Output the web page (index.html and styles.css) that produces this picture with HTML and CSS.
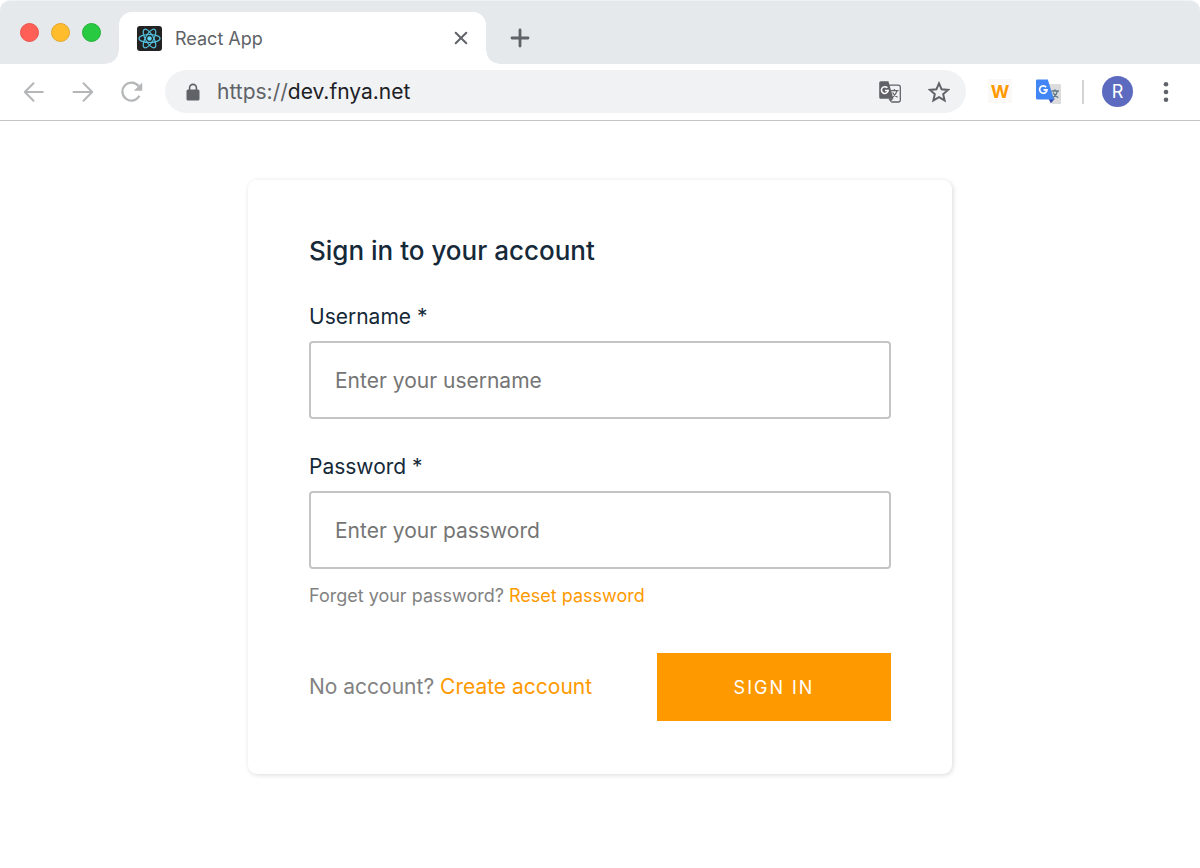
FILE: index.html
```html
<!DOCTYPE html>
<html lang="en">
<head>
    <meta charset="UTF-8">
    <meta name="viewport" content="width=device-width, initial-scale=1.0">
    <title>React App</title>
    <link rel="stylesheet" href="styles.css">
</head>
<body>
    <header class="browser">
        <div class="tab-strip">
            <div class="lights">
                <span class="light red"></span>
                <span class="light yellow"></span>
                <span class="light green"></span>
            </div>
            <div class="tab">
                <svg class="favicon" width="25" height="25" viewBox="0 0 25 25">
                    <rect width="25" height="25" rx="3" fill="#222"/>
                    <g fill="none" stroke="#53c1de" stroke-width="1.2">
                        <ellipse cx="12.5" cy="12.5" rx="10.5" ry="4"/>
                        <ellipse cx="12.5" cy="12.5" rx="10.5" ry="4" transform="rotate(60 12.5 12.5)"/>
                        <ellipse cx="12.5" cy="12.5" rx="10.5" ry="4" transform="rotate(120 12.5 12.5)"/>
                    </g>
                    <circle cx="12.5" cy="12.5" r="2.2" fill="#61dafb"/>
                </svg>
                <span class="tab-title">React App</span>
                <button class="icon-btn" type="button" aria-label="Close tab">
                    <svg width="14" height="14" viewBox="0 0 14 14" fill="none" stroke="#5f6368" stroke-width="2" stroke-linecap="round">
                        <path d="M1.7 1.7l10.6 10.6M12.3 1.7L1.7 12.3"/>
                    </svg>
                </button>
            </div>
            <button class="icon-btn new-tab" type="button" aria-label="New tab">
                <svg width="20" height="20" viewBox="0 0 20 20" fill="none" stroke="#5f6368" stroke-width="2.8" stroke-linecap="round">
                    <path d="M10 2v16M2 10h16"/>
                </svg>
            </button>
        </div>

        <div class="toolbar">
            <nav class="nav-buttons">
                <button class="icon-btn" type="button" aria-label="Back">
                    <svg width="22" height="22" viewBox="0 0 22 22" fill="none" stroke="#b4b6b8" stroke-width="2" stroke-linecap="round" stroke-linejoin="round">
                        <path d="M19.8 11H2M10.5 2.3L1.8 11l8.7 8.7"/>
                    </svg>
                </button>
                <button class="icon-btn" type="button" aria-label="Forward">
                    <svg width="22" height="22" viewBox="0 0 22 22" fill="none" stroke="#b4b6b8" stroke-width="2" stroke-linecap="round" stroke-linejoin="round">
                        <path d="M1.5 11H20M11.5 2.3l8.7 8.7-8.7 8.7"/>
                    </svg>
                </button>
                <button class="icon-btn" type="button" aria-label="Reload">
                    <svg width="22" height="22" viewBox="0 0 22 22">
                        <path d="M17.6 5.2A9 9 0 1 0 18.4 14.8" fill="none" stroke="#b4b6b8" stroke-width="2.2"/>
                        <path d="M21.2 1.4v8.4h-8.4z" fill="#b4b6b8"/>
                    </svg>
                </button>
            </nav>

            <div class="address-bar">
                <svg class="lock" width="14" height="18" viewBox="0 0 14 18">
                    <rect x="0.5" y="6.5" width="13" height="11" rx="1.6" fill="#5f6368"/>
                    <path d="M3.6 7V4.8a3.4 3.4 0 0 1 6.8 0V7" fill="none" stroke="#5f6368" stroke-width="1.6"/>
                </svg>
                <div class="url"><span class="scheme">https://</span>dev.fnya.net</div>
                <button class="icon-btn" type="button" aria-label="Translate this page">
                    <svg width="22" height="22" viewBox="0 0 22 22">
                        <path d="M8.5 4.2h11a1.8 1.8 0 0 1 1.8 1.8v13.2a1.8 1.8 0 0 1-1.8 1.8h-7.3" fill="none" stroke="#5f6368" stroke-width="1.3"/>
                        <path d="M1.8 0.2h7.6l5 17.6H1.8A1.6 1.6 0 0 1 0.2 16.2V1.8A1.6 1.6 0 0 1 1.8 0.2z" fill="#5f6368"/>
                        <path d="M9.3 17.5h5l-2.8 3.6z" fill="#5f6368"/>
                        <path d="M8.4 6.8A3.4 3.4 0 1 0 9.2 9.5H6" fill="none" stroke="#fff" stroke-width="1.5"/>
                        <path d="M12 9.7h7.5M15.4 8v1.7M18 9.7c-.6 2.8-2.2 4.900-4.300 6.500M13.600 11.400c1 2.200 2.600 3.700 5 4.900" fill="none" stroke="#5f6368" stroke-width="1.2"/>
                    </svg>
                </button>
                <button class="icon-btn" type="button" aria-label="Bookmark this page">
                    <svg width="22" height="22" viewBox="0 0 22 22" fill="none" stroke="#5f6368" stroke-width="2">
                        <path d="M11 2.4l2.6 5.900 6.400.6-4.800 4.200 1.400 6.300L11 16.100l-5.600 3.300 1.400-6.300L2 8.900l6.400-.6z"/>
                    </svg>
                </button>
            </div>

            <div class="extensions">
                <button class="icon-btn ext-w" type="button" aria-label="W extension">W</button>
                <button class="icon-btn" type="button" aria-label="Google Translate">
                    <svg width="25" height="25" viewBox="0 0 25 25">
                        <path d="M11 5h12.5a1.5 1.5 0 0 1 1.5 1.5V25H16z" fill="#dcdcdc"/>
                        <path d="M12.500 19.500h6.500l-4.200 5z" fill="#3749ab"/>
                        <path d="M1.2 0.5h10.6l6.200 20H1.2A1.2 1.2 0 0 1 0 19.300V1.7A1.2 1.2 0 0 1 1.2 0.5z" fill="#4285f4"/>
                        <path d="M10.2 8.2A3.700 3.700 0 1 0 11 10.900H7.500" fill="none" stroke="#fff" stroke-width="1.7"/>
                        <path d="M15.5 12H23M19 10.300V12M21.500 12c-.6 2.800-2.200 5-4.500 6.600M17 13.500c1 2.300 2.700 4 5.200 5.200" fill="none" stroke="#607988" stroke-width="1.3"/>
                    </svg>
                </button>
            </div>
            <span class="divider"></span>
            <button class="avatar" type="button" aria-label="Profile">R</button>
            <button class="icon-btn" type="button" aria-label="Menu">
                <svg width="6" height="20" viewBox="0 0 6 20" fill="#5f6368">
                    <circle cx="3" cy="2.3" r="2.3"/>
                    <circle cx="3" cy="10" r="2.3"/>
                    <circle cx="3" cy="17.7" r="2.3"/>
                </svg>
            </button>
        </div>
    </header>

    <main class="page">
        <form class="card">
            <h1 class="title">Sign in to your account</h1>

            <div class="field">
                <label for="username">Username *</label>
                <input type="text" id="username" placeholder="Enter your username">
            </div>

            <div class="field">
                <label for="password">Password *</label>
                <input type="password" id="password" placeholder="Enter your password">
            </div>
            <p class="hint">Forget your password? <a href="#">Reset password</a></p>

            <div class="form-footer">
                <p class="signup">No account? <a href="#">Create account</a></p>
                <button class="submit" type="submit">SIGN IN</button>
            </div>
        </form>
    </main>
</body>
</html>
```
FILE: styles.css
```css
* {
    box-sizing: border-box;
}
body {
    margin: 0;
    font-family: Inter, "Liberation Sans", sans-serif;
    color: #152939;
    background: #fff;
}
h1, p {
    margin: 0;
}
a {
    color: #ff9900;
    text-decoration: none;
}
button {
    font-family: inherit;
    border: none;
    cursor: pointer;
}
.icon-btn {
    display: flex;
    padding: 0;
    background: none;
}

/* browser window */
.browser {
    border-bottom: 1px solid #c4c5c6;
}
.tab-strip {
    display: flex;
    height: 64px;
    padding: 11px 20px 0;
    background: #e5e9ec;
    border-top: 1px solid #f0f2f4;
    border-radius: 10px 10px 0 0;
}
.lights {
    display: flex;
    gap: 12px;
    width: 99px;
    padding-top: 11px;
}
.light {
    width: 19px;
    height: 19px;
    border-radius: 50%;
}
.red {
    background: #ff5f57;
    border: 1px solid #ea5149;
}
.yellow {
    background: #ffbd2e;
    border: 1px solid #e3a52b;
}
.green {
    background: #28ca42;
    border: 1px solid #22b236;
}
.tab {
    position: relative;
    display: flex;
    align-items: center;
    gap: 13px;
    width: 367px;
    padding: 0 18px;
    background: #fff;
    border-radius: 13px 13px 0 0;
}
/* curved feet of the active tab */
.tab::before,
.tab::after {
    content: "";
    position: absolute;
    bottom: 0;
    width: 13px;
    height: 13px;
}
.tab::before {
    right: 100%;
    background: radial-gradient(circle at 0 0, #e5e9ec 12px, #fff 13px);
}
.tab::after {
    left: 100%;
    background: radial-gradient(circle at 100% 0, #e5e9ec 12px, #fff 13px);
}
.tab-title {
    flex: 1;
    font-size: 18px;
    color: #5f6368;
}
.new-tab {
    align-self: center;
    margin-left: 24px;
}
.toolbar {
    display: flex;
    align-items: center;
    height: 56px;
    padding: 0 31px 1px 23px;
}
.nav-buttons {
    display: flex;
    gap: 27px;
    margin-right: 22px;
}
.address-bar {
    flex: 1;
    display: flex;
    align-items: center;
    gap: 27px;
    height: 43px;
    padding: 0 16px 0 21px;
    background: #f1f2f4;
    border-radius: 22px;
}
.lock {
    margin-right: -10px;
}
.url {
    flex: 1;
    font-size: 21px;
    color: #202124;
}
.scheme {
    color: #5f6368;
}
.extensions {
    display: flex;
    gap: 24px;
    margin-left: 22px;
}
.ext-w {
    align-items: center;
    justify-content: center;
    width: 24px;
    height: 24px;
    background: #faf9f8;
    font-size: 18px;
    font-weight: 700;
    color: #ff9900;
}
.divider {
    width: 2px;
    height: 24px;
    margin: 0 18px 0 21px;
    background: #d2d4d6;
}
.avatar {
    width: 31px;
    height: 31px;
    margin-right: 30px;
    padding: 0;
    border-radius: 50%;
    background: #5c6bc0;
    font-size: 18px;
    color: #fff;
}

/* sign in form */
.page {
    padding: 59px 20px;
}
.card {
    max-width: 704px;
    margin: 0 auto;
    padding: 54px 61px 53px;
    border-radius: 9px;
    box-shadow: 1px 1px 5px rgba(0, 0, 0, 0.15);
}
.title {
    margin-bottom: 36px;
    font-size: 26px;
    font-weight: 500;
    line-height: 34px;
}
.field {
    margin-bottom: 35px;
}
.field label {
    display: block;
    margin-bottom: 11px;
    font-size: 21px;
    line-height: 26px;
}
.field input {
    display: block;
    width: 100%;
    height: 78px;
    padding: 0 24px;
    border: 2px solid #c4c4c4;
    border-radius: 4px;
    font-family: inherit;
    font-size: 21px;
    color: #152939;
}
.field input::placeholder {
    color: #757575;
}
.hint {
    margin-top: -20px;
    font-size: 18px;
    line-height: 24px;
    color: #828282;
}
.form-footer {
    display: flex;
    align-items: center;
    justify-content: space-between;
    margin-top: 45px;
}
.signup {
    font-size: 21px;
    line-height: 26px;
    color: #828282;
}
.submit {
    min-width: 234px;
    height: 68px;
    background: #ff9900;
    font-size: 18px;
    letter-spacing: 2px;
    color: #fff;
}
```
